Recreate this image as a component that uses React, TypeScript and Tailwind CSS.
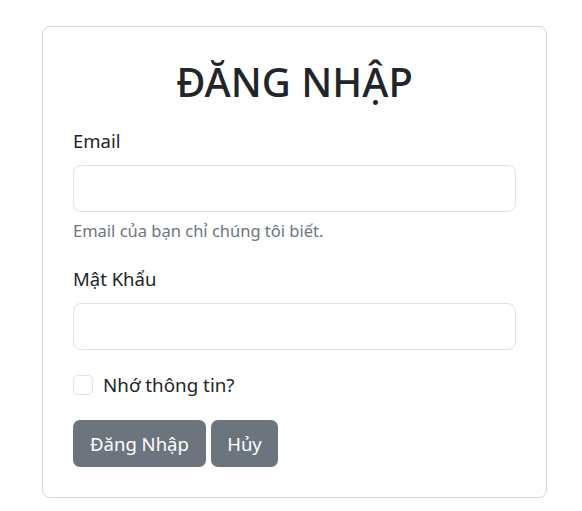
export default function App() {
  return (
    <div className="min-h-screen bg-white pt-[26px] pl-[42px] font-['Noto_Sans',sans-serif] text-[#212529]">
      <div className="w-[505px] rounded-[8px] border border-[#d4d5d7] px-[30px] pt-[28px] pb-[30px]">
        <h1 className="text-center text-[40px] leading-[54px] font-medium">ĐĂNG NHẬP</h1>

        <form className="mt-[17px]">
          <label className="block text-[18.5px] leading-[30px]">Email</label>
          <input
            type="email"
            className="mt-[9px] block h-[47px] w-full rounded-[8px] border border-[#dee2e6] px-3 outline-none"
          />
          <p className="mt-[6px] text-[16.5px] leading-[26px] text-[#6c757d]">Email của bạn chỉ chúng tôi biết.</p>

          <label className="mt-[20px] block text-[18.5px] leading-[30px]">Mật Khẩu</label>
          <input
            type="password"
            className="mt-[9px] block h-[47px] w-full rounded-[8px] border border-[#dee2e6] px-3 outline-none"
          />

          <div className="mt-[20px] flex h-[30px] items-center">
            <span className="h-[20px] w-[20px] rounded-[5px] border border-[#dee2e6] bg-white" />
            <span className="ml-[10px] text-[18.8px] leading-[30px]">Nhớ thông tin?</span>
          </div>

          <div className="mt-[20px] flex gap-[5px]">
            <button
              type="button"
              className="h-[47px] w-[133px] rounded-[7px] bg-[#6c757d] text-[18.5px] text-white"
            >
              Đăng Nhập
            </button>
            <button
              type="button"
              className="h-[47px] w-[67px] rounded-[7px] bg-[#6c757d] text-[18.5px] text-white"
            >
              Hủy
            </button>
          </div>
        </form>
      </div>
    </div>
  );
}
